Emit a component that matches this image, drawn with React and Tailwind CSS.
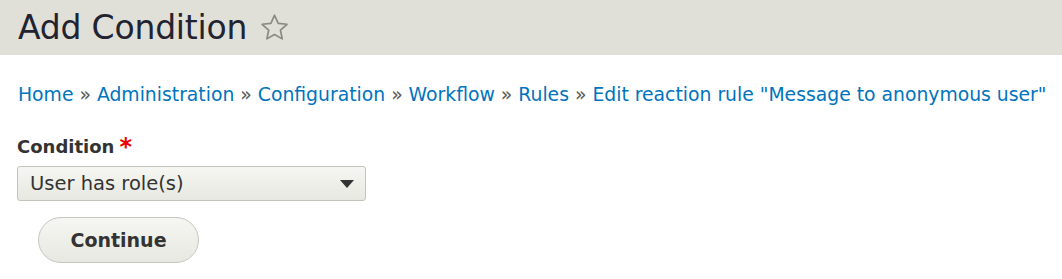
export default function App() {
  const crumbs = ["Home", "Administration", "Configuration", "Workflow", "Rules", 'Edit reaction rule "Message to anonymous user"'];
  return (
    <div className="w-[1062px] h-[279px] bg-white overflow-hidden" style={{ fontFamily: '"DejaVu Sans", Verdana, sans-serif' }}>
      <div className="h-[55px] bg-[#e0e0d8] flex items-center pl-[18px]">
        <h1 className="text-[33px] leading-none text-[#222330] tracking-[-0.2px]">Add Condition</h1>
        <svg className="ml-[12px]" width="31" height="31" viewBox="0 0 24 24">
          <path d="M12 2.5l2.9 6.3 6.8.7-5.1 4.6 1.4 6.7L12 17.4l-5.9 3.4 1.4-6.7L2.4 9.5l6.8-.7z" fill="none" stroke="#8a8a80" strokeWidth="1.3" strokeLinejoin="round" />
        </svg>
      </div>
      <div className="pl-[18px] pt-[28px] text-[18.8px] leading-[24px] text-[#0074bd] whitespace-nowrap">
        {crumbs.map((c, i) => (
          <span key={i}>
            {i > 0 && <span className="text-[#5a5a5a]"> » </span>}
            <a href="#" className="text-[#0074bd]">{c}</a>
          </span>
        ))}
      </div>
      <div className="pl-[17px] pt-[29px]">
        <label className="flex items-start h-[22px] text-[18px] font-bold leading-[22px] text-[#333]">
          Condition<span className="ml-[5px] text-[24px] leading-[22px] text-[#e00]">*</span>
        </label>
        <div className="mt-[8px] w-[349px] h-[35px] border border-[#c4c4bc] rounded-[3px] bg-gradient-to-b from-[#f6f6f2] to-[#e8e8e2] flex items-center justify-between pl-[12px] pr-[11px] text-[19.5px] text-[#333]">
          <span>User has role(s)</span>
          <svg width="14" height="10" viewBox="0 0 14 10"><path d="M0 1h14L7 9z" fill="#333" /></svg>
        </div>
        <button className="mt-[16px] ml-[21px] w-[161px] h-[46px] rounded-full border border-[#c6c6be] bg-gradient-to-b from-[#f6f6f2] to-[#e8e8e2] text-[19px] font-bold text-[#333]">
          Continue
        </button>
      </div>
    </div>
  );
}
